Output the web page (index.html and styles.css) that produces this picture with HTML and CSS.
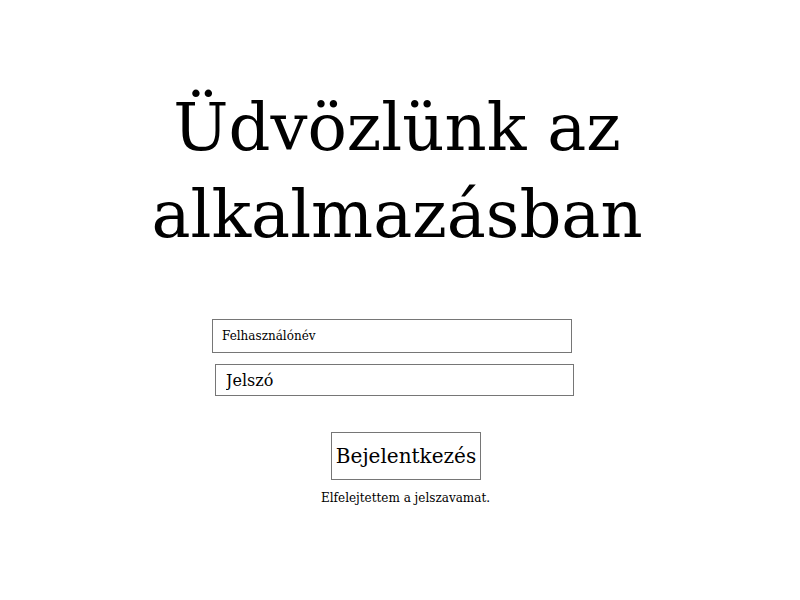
FILE: index.html
```html
<!DOCTYPE html>
<html>
<head>
    <title>Bejelentkezés</title>
    <link rel="stylesheet" href="styles.css">
</head>
<body>
    <div class="login">
        <h1 class="title">Üdvözlünk az alkalmazásban</h1>
        <form class="login-form" onsubmit="event.preventDefault();">
            <input type="text" class="field field-user" placeholder="Felhasználónév">
            <input type="password" class="field field-pass" placeholder="Jelszó">
            <button type="submit" class="button">Bejelentkezés</button>
            <a href="#" class="forgot">Elfelejtettem a jelszavamat.</a>
        </form>
    </div>
</body>
</html>
```

FILE: styles.css
```css
body {
    margin: 0;
    font-family: "DejaVu Serif", serif;
    background: #fff;
    color: #000;
}

.login {
    display: flex;
    flex-direction: column;
    align-items: center;
    padding-top: 84px;
}

.title {
    width: 520px;
    margin: 0;
    font-size: 65.5px;
    font-weight: normal;
    line-height: 87px;
    text-align: center;
    margin-left: -6px;
}

.login-form {
    display: flex;
    flex-direction: column;
    align-items: center;
    margin-top: 61px;
}

.field {
    box-sizing: border-box;
    border: 1px solid #767676;
    background: #fff;
    font-family: "DejaVu Serif", serif;
    color: #000;
}

.field::placeholder {
    color: #000;
}

.field-user {
    width: 360px;
    height: 34px;
    padding: 0 9px;
    font-size: 12px;
    margin-left: -16px;
}

.field-pass {
    width: 359px;
    height: 32px;
    padding: 0 10px;
    font-size: 16px;
    margin-top: 11px;
    margin-left: -11px;
}

/* rectangular button */
.button {
    box-sizing: border-box;
    width: 150px;
    height: 48px;
    margin-top: 36px;
    margin-left: 12px;
    background: #fff;
    border: 1px solid #767676;
    font-family: "DejaVu Serif", serif;
    font-size: 20px;
    color: #000;
    padding: 0;
    cursor: pointer;
}

.forgot {
    margin-top: 11px;
    margin-left: 11px;
    font-size: 12px;
    color: #000;
    text-decoration: none;
}
```
